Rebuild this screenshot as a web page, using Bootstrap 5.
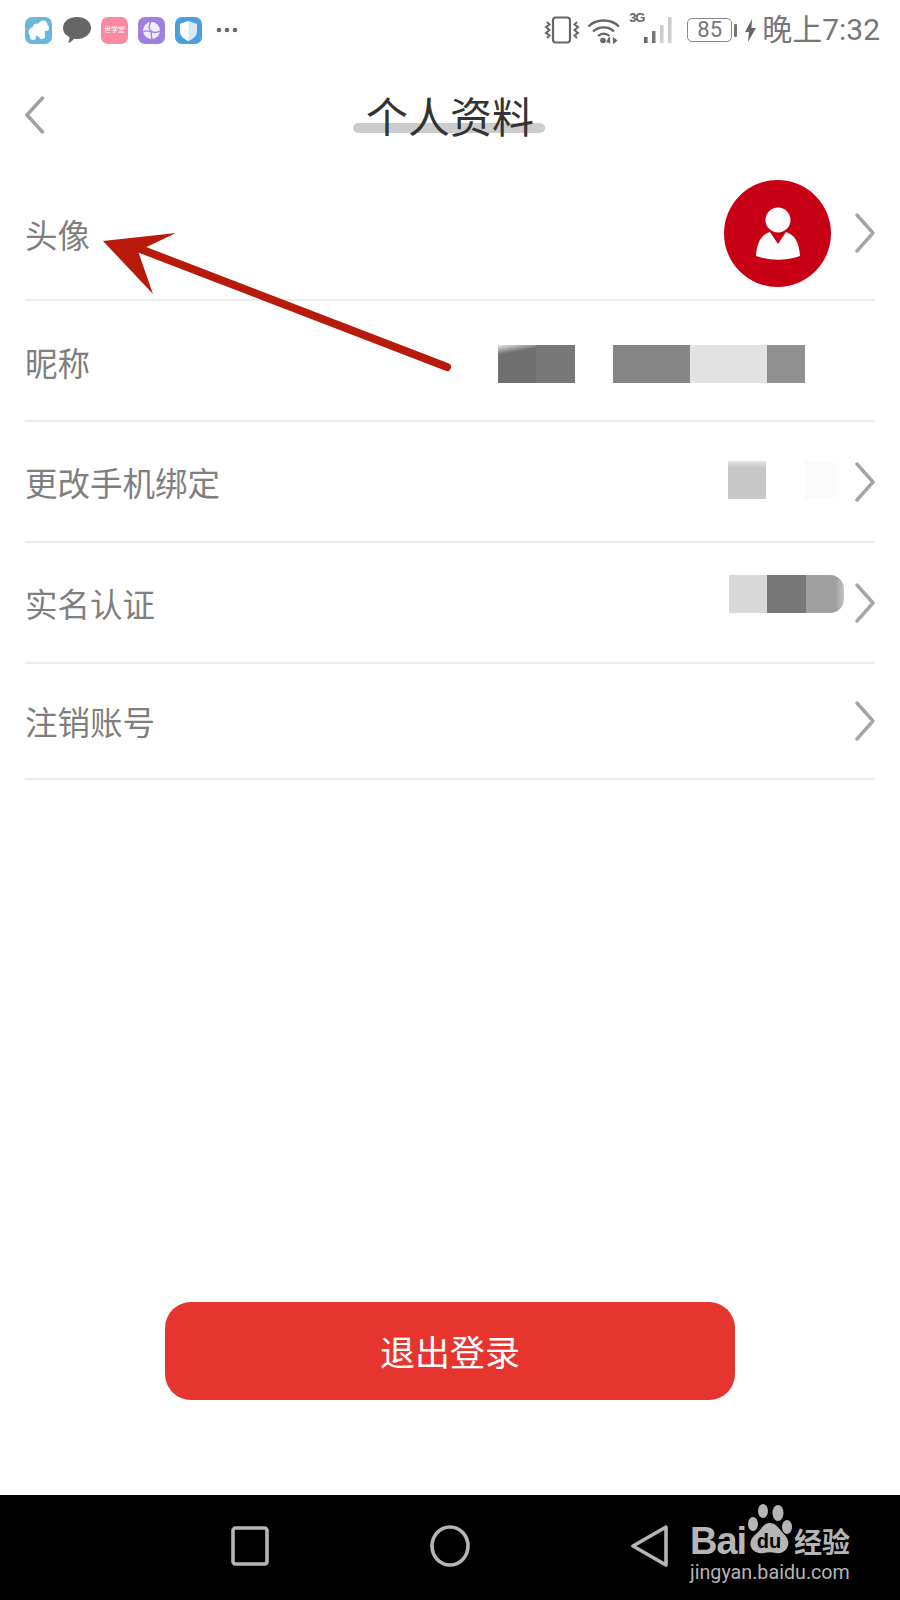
<!DOCTYPE html>
<html lang="zh-CN">
<head>
<meta charset="utf-8">
<title>个人资料</title>
<link href="https://cdn.jsdelivr.net/npm/bootstrap@5.3.0/dist/css/bootstrap.min.css" rel="stylesheet">
<style>
html,body{margin:0;background:#fff}
body{font-family:"Roboto","Noto Sans CJK SC",sans-serif}
.phone{width:900px;height:1600px;overflow:hidden;position:relative;background:#fff}
.statusbar{height:60px;padding:0 20px 0 25px;flex:none}
.appicon{width:27px;height:27px;border-radius:7px;flex:none;display:block}
.tiny-label{font-size:7px;color:#fff;line-height:27px;text-align:center;display:block;white-space:nowrap}
.bg-a{background:#6ab6de}.bg-c{background:#fb8aa0}.bg-d{background:#a07fe0}.bg-e{background:#4a9fdc}
.sb-right{color:#777}
.battery{width:45px;height:24px;border:1.5px solid #888;border-radius:5px;font-size:22px;line-height:21px;text-align:center;color:#777}
.nub{width:3px;height:13px;background:#777;border-radius:1px;margin-left:2px}
.clock{font-size:30px;line-height:36px;font-weight:400;color:#777;letter-spacing:0}
.threeg{font:700 13px/13px "Liberation Sans",sans-serif;width:14px;color:#666;align-self:flex-start;margin-top:-1px;letter-spacing:-1px}
.titlebar{height:114px;flex:none;padding-left:25px;position:relative}
.titlebar svg{margin-top:-4px}
.page-title{position:absolute;left:0;right:0;top:29px;text-align:center;font-size:42px;line-height:60px;color:#333;margin:0;font-weight:400}
.title-wrap{position:relative;display:inline-block;z-index:0}
.title-wrap::before{content:"";position:absolute;left:-13px;right:-11px;top:34px;height:10px;border-radius:5px;background:#ccc;z-index:-1}
.inforow{margin:0 25px;border-bottom:2px solid #ececec;font-size:32.500px;color:#7f7f7f;line-height:44px}
.r1{height:127px}
.r2,.r3,.r4{height:121px}
.r5{height:116px}
.inforow .lbl{margin-top:6px}
.r1 .lbl{margin-top:0}
.r2 .lbl{margin-top:8px}
.avatar{width:107px;height:107px;border-radius:50%;background:#c80016;margin-right:24px;margin-top:-6px;flex:none}
.chev{flex:none;width:20px;height:40px}
.lift{margin-top:-8px}
.blur-row{display:flex;height:38px}
.blur-row i{display:block;width:38.4px;height:38px}
.g1{background:linear-gradient(170deg,#e8e8e8,#707070 22%)}.g2{background:#777}.g3{background:#858585}.g4{background:#e2e2e2}.g5{background:#8f8f8f}
.g6{background:linear-gradient(#e4e4e4,#c8c8c8 18%)}.g7{background:linear-gradient(90deg,#fafafa 60%,#fff);border-radius:0 14px 14px 0}.g8{background:#d9d9d9}.g9{background:#787878}
.g10{background:linear-gradient(90deg,#a0a0a0 78%,#c4c4c4);border-radius:0 14px 14px 0}
.r2 .blur-row{margin-right:70px;margin-top:6px}
.r3 .blur-row{margin-right:12px;margin-top:-4px}
.r4 .blur-row{margin-right:11px;margin-top:-18px}
.logout{width:570px;height:98px;border-radius:26px;background:#e6352f;border:0;color:#fff;font-size:35px;line-height:1;margin:auto auto 95px;padding-top:13px}
.logout:hover{background:#e6352f;color:#fff}
.navkeys{height:105px;background:#000;flex:none;gap:160px;position:relative}
.navkeys svg{display:block;margin-top:-3px}
.watermark{position:absolute;left:690px;top:1504px;width:165px;height:76px;color:#b5b5b5}
.wm-bai{position:absolute;left:0;top:14px;font:700 38px/46px "Liberation Sans",sans-serif;letter-spacing:-1px}
.wm-cn{position:absolute;left:104px;top:19px;font:600 28px/36px "Noto Sans CJK SC",sans-serif}
.wm-url{position:absolute;left:0;top:57px;font:400 19.700px/24px "Roboto",sans-serif;white-space:nowrap}
.wm-paw{position:absolute;left:52px;top:0}
.pointer{position:absolute;left:0;top:0;pointer-events:none}
</style>
</head>
<body>
<div class="phone d-flex flex-column">
  <div class="statusbar d-flex align-items-center">
    <div class="d-flex align-items-center gap-2">
      <svg class="appicon bg-a" viewBox="0 0 27 27"><g fill="#fff"><circle cx="18" cy="8" r="4.500"/><circle cx="12" cy="11" r="4.500"/><circle cx="8" cy="15" r="4.500"/><circle cx="15" cy="15" r="5"/><circle cx="8" cy="20" r="3"/><circle cx="17" cy="19" r="3"/><circle cx="21" cy="11" r="3"/></g></svg>
      <svg width="30" height="29" viewBox="0 0 30 29" style="margin-left:2px"><path fill="#666" d="M15 1c8 0 14 4.600 14 11 0 6-6 11-14 11-1 0-2 0-3-.2-1.500 2-4 4-6 4.200 1-1.500 1.500-4 1.300-6C3 19 1 16 1 12 1 5.600 7 1 15 1z"/></svg>
      <span class="appicon bg-c" style="margin-left:1px"><span class="tiny-label">世学堂</span></span>
      <svg class="appicon bg-d" style="margin-left:2px" viewBox="0 0 27 27"><circle cx="13.500" cy="13.500" r="8.500" fill="#f1ecfb"/><path d="M13 5c-3 4-2 7 0 9s6 2 9 0M5 15c3-2 6-1 8 0l1 8" fill="none" stroke="#a07fe0" stroke-width="1.300"/></svg>
      <svg class="appicon bg-e" style="margin-left:2px" viewBox="0 0 27 27"><path fill="#d5e9f7" d="M13.500 4l8.500 3v7c0 5-4 8-8.500 10C9 22 5 19 5 14V7z"/><path fill="#fff" d="M13.500 4v20C9 22 5 19 5 14V7z"/></svg>
      <svg width="22" height="6" viewBox="0 0 22 6" style="margin-left:6px"><circle cx="3" cy="3" r="2.300" fill="#666"/><circle cx="11" cy="3" r="2.300" fill="#666"/><circle cx="19" cy="3" r="2.300" fill="#666"/></svg>
    </div>
    <div class="sb-right d-flex align-items-center ms-auto">
      <svg width="36" height="28" viewBox="0 0 36 28" fill="none" stroke="#666"><rect x="9" y="1.500" width="17" height="25" rx="3" stroke-width="2.200"/><path d="M3 6l2.500 2.500L2 11l3.500 3L2 17l3.500 2.500L3 22M33 6l-2.500 2.500L34 11l-3.500 3L34 17l-3.500 2.500L33 22" stroke-width="2"/></svg>
      <svg width="34" height="27" viewBox="0 0 34 27" fill="none" stroke="#666" stroke-width="2.300" style="margin-left:7px"><path d="M1.500 9.500C9 1.500 24 1.500 32 9.500M6 14.500c6-5.500 15.500-5.500 21 0M11 19c3.500-3 8-3 11.500 0"/><circle cx="16" cy="23.500" r="2.800" fill="#666" stroke="none"/><path d="M22 21l-2 4h3M22.500 20v6.500M26.500 21v5l3-2.500z" stroke-width="1.200" fill="#666"/></svg>
      <span class="threeg" style="margin-left:8px">3G</span>
      <svg width="29" height="28" viewBox="0 0 29 28"><rect x="1" y="21" width="3.500" height="6" fill="#666"/><rect x="9" y="15" width="3.500" height="12" fill="#777"/><rect x="17" y="9" width="3.500" height="18" fill="#ccc"/><rect x="25" y="1" width="3.500" height="26" fill="#ccc"/></svg>
      <div class="battery" style="margin-left:15px">85</div>
      <span class="nub"></span>
      <svg width="11" height="23" viewBox="0 0 11 23" style="margin-left:8px"><path fill="#666" d="M7 0L0 13h4l-1 10 8-14H6.500z"/></svg>
      <span class="clock" style="margin-left:6px">晚上7:32</span>
    </div>
  </div>

  <div class="titlebar d-flex align-items-center">
    <svg width="20" height="38" viewBox="0 0 20 38" fill="none" stroke="#a0a0a0" stroke-width="3.400" stroke-linecap="round" stroke-linejoin="round"><path d="M17.500 2L2 19l15.500 17"/></svg>
    <h1 class="page-title"><span class="title-wrap">个人资料</span></h1>
  </div>

  <div class="inforow r1 d-flex align-items-center justify-content-between">
    <span class="lbl">头像</span>
    <div class="d-flex align-items-center">
      <div class="avatar d-flex align-items-center justify-content-center">
        <svg width="46" height="54" viewBox="0 0 46 54"><circle cx="23" cy="13" r="12.500" fill="#fff"/><path fill="#fff" d="M15 25l8 12 8-12c8 2.500 13 9 14 24-14 5-30 5-44 0C2 34 7 27.500 15 25z"/></svg>
      </div>
      <svg class="chev lift" viewBox="0 0 20 40" fill="none" stroke="#a5a5a5" stroke-width="3.400" stroke-linecap="round" stroke-linejoin="round"><path d="M2 2l16 18L2 38"/></svg>
    </div>
  </div>

  <div class="inforow r2 d-flex align-items-center justify-content-between">
    <span class="lbl">昵称</span>
    <div class="blur-row"><i class="g1"></i><i class="g2"></i><i></i><i class="g3"></i><i class="g3"></i><i class="g4"></i><i class="g4"></i><i class="g5"></i></div>
  </div>

  <div class="inforow r3 d-flex align-items-center">
    <span class="lbl">更改手机绑定</span>
    <div class="blur-row ms-auto"><i class="g6"></i><i></i><i class="g7"></i></div>
    <svg class="chev" viewBox="0 0 20 40" fill="none" stroke="#a5a5a5" stroke-width="3.400" stroke-linecap="round" stroke-linejoin="round"><path d="M2 2l16 18L2 38"/></svg>
  </div>

  <div class="inforow r4 d-flex align-items-center">
    <span class="lbl">实名认证</span>
    <div class="blur-row ms-auto"><i class="g8"></i><i class="g9"></i><i class="g10"></i></div>
    <svg class="chev" viewBox="0 0 20 40" fill="none" stroke="#a5a5a5" stroke-width="3.400" stroke-linecap="round" stroke-linejoin="round"><path d="M2 2l16 18L2 38"/></svg>
  </div>

  <div class="inforow r5 d-flex align-items-center justify-content-between">
    <span class="lbl">注销账号</span>
    <svg class="chev" viewBox="0 0 20 40" fill="none" stroke="#a5a5a5" stroke-width="3.400" stroke-linecap="round" stroke-linejoin="round"><path d="M2 2l16 18L2 38"/></svg>
  </div>

  <button type="button" class="btn logout">退出登录</button>

  <div class="navkeys d-flex align-items-center justify-content-center">
    <svg width="40" height="42" viewBox="0 0 40 42" fill="none" stroke="#b5b5b5" stroke-width="3.600" stroke-linejoin="round"><rect x="3" y="3" width="34" height="36" rx="2.500"/></svg>
    <svg width="40" height="42" viewBox="0 0 40 42" fill="none" stroke="#b5b5b5" stroke-width="3.600"><ellipse cx="20" cy="21" rx="18" ry="19"/></svg>
    <svg width="40" height="42" viewBox="0 0 40 42" fill="none" stroke="#b5b5b5" stroke-width="3.600" stroke-linejoin="round"><path d="M36 2L3 21l33 19z"/></svg>
  </div>

  <div class="watermark">
    <span class="wm-bai">Bai</span>
    <svg class="wm-paw" width="52" height="52" viewBox="0 0 52 52">
      <ellipse cx="21" cy="7" rx="5" ry="7" fill="#b5b5b5"/><ellipse cx="36" cy="9" rx="5.500" ry="8" fill="#b5b5b5"/>
      <ellipse cx="11" cy="20" rx="5" ry="7" fill="#b5b5b5"/><ellipse cx="45" cy="23" rx="5" ry="7" fill="#b5b5b5"/>
      <path fill="#b5b5b5" d="M28 19c6 0 9 6 13 10 5 5 7 10 4 15-2 4-7 6-11 5-4-1-8-1-12 0-5 1-11-1-13-6-2-5 1-10 6-14 5-4 6-10 13-10z"/>
      <text x="27" y="44" text-anchor="middle" font-family="Liberation Sans, sans-serif" font-weight="700" font-size="20" fill="#000">du</text>
    </svg>
    <span class="wm-cn">经验</span>
    <span class="wm-url">jingyan.baidu.com</span>
  </div>

  <svg class="pointer" width="900" height="1600" viewBox="0 0 900 1600">
    <path d="M447 367L135 247" stroke="#b81a0c" stroke-width="8" stroke-linecap="round" fill="none"/>
    <path fill="#b81a0c" d="M103 241l73-8-38 18 15 43z"/>
  </svg>
</div>
<script src="https://cdn.jsdelivr.net/npm/bootstrap@5.3.0/dist/js/bootstrap.bundle.min.js"></script>
</body>
</html>
